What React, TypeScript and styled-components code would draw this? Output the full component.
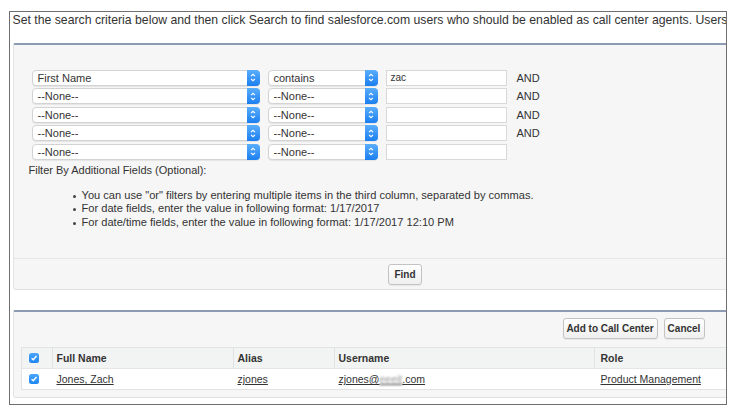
import React from "react";
import styled, { createGlobalStyle } from "styled-components";

const Global = createGlobalStyle`
  html, body { margin: 0; padding: 0; background: #ffffff; }
  body { font-family: "Liberation Sans", Arial, sans-serif; color: #2b2b2b; }
  * { box-sizing: border-box; }
`;

const Frame = styled.div`
  margin: 11px 0 0 9px;
  width: 718px;
  height: 394px;
  border: 1.5px solid #6f6f6f;
  overflow: hidden;
  background: #fff;
`;

const Intro = styled.div`
  padding: 1px 0 0 2.5px;
  font-size: 12.25px;
  line-height: 14px;
  white-space: nowrap;
  overflow: hidden;
  color: #333;
`;

const Panel = styled.div<{ $top: number }>`
  margin: ${(p) => p.$top}px 0 0 2.5px;
  width: 784px;
  background: #f6f6f6;
  border-top: 2px solid #8c9ab2;
  border-left: 1px solid #e4e4e4;
  border-bottom: 1px solid #e0e0e0;
  border-radius: 2px 0 0 3px;
`;

const SearchBody = styled.div`
  height: 213px;
  padding: 24.5px 0 0 15px;
`;

const Criteria = styled.div`
  margin-left: 3px;
  display: flex;
  flex-direction: column;
  gap: 2.5px;
`;

const Row = styled.div`
  display: flex;
  align-items: center;
  gap: 8px;
  height: 16px;
`;

const SelectBox = styled.div<{ $w: number }>`
  width: ${(p) => p.$w}px;
  height: 16px;
  display: flex;
  align-items: stretch;
  background: #fff;
  border: 1px solid #d3d3d3;
  border-radius: 4px;
  box-shadow: 0 1px 1px rgba(0, 0, 0, 0.07);
  font-size: 11px;
  color: #333;
`;

const SelectText = styled.span`
  flex: 1;
  padding-left: 5px;
  line-height: 14px;
  white-space: nowrap;
  overflow: hidden;
`;

const SelectArrow = styled.span`
  width: 13px;
  margin: -1px -1px -1px 0;
  border-radius: 0 4px 4px 0;
  background: linear-gradient(#5aaefc, #1b7ff0);
  display: flex;
  align-items: center;
  justify-content: center;
`;

const TextInput = styled.div`
  width: 121px;
  height: 16px;
  background: #fff;
  border: 1px solid #d8d8d8;
  font-size: 10px;
  line-height: 14px;
  padding-left: 4px;
  color: #333;
`;

const AndLabel = styled.span`
  margin-left: 2px;
  font-size: 11px;
  color: #333;
`;

const FilterTitle = styled.div`
  margin-top: 4px;
  font-size: 11px;
  line-height: 13px;
  color: #333;
`;

const Notes = styled.ul`
  margin: 12px 0 0 53px;
  padding: 0;
  list-style: none;
  font-size: 11.1px;
  line-height: 13.5px;
  color: #333;
`;

const Note = styled.li`
  position: relative;
  &::before {
    content: "";
    position: absolute;
    left: -9px;
    top: 6px;
    width: 3px;
    height: 3px;
    border-radius: 50%;
    background: #444;
  }
`;

const FindBar = styled.div`
  border-top: 1px solid #e6e6e6;
  height: 31px;
  display: flex;
  align-items: center;
  justify-content: center;
`;

const Button = styled.button<{ $w: number }>`
  width: ${(p) => p.$w}px;
  height: 21px;
  padding: 0;
  border: 1px solid #c3c3c3;
  border-radius: 3px;
  background: linear-gradient(#ffffff, #efefef);
  box-shadow: 0 1px 1px rgba(0, 0, 0, 0.06);
  font-family: "Liberation Sans", Arial, sans-serif;
  font-weight: bold;
  font-size: 10px;
  color: #333;
`;

const ButtonBar = styled.div`
  display: flex;
  justify-content: flex-end;
  gap: 6px;
  padding: 6px 92px 0 0;
`;

const Table = styled.div`
  margin: 8px 0 7px 7px;
  border: 1px solid #e3e3e3;
  background: #fff;
`;

const TRow = styled.div<{ $head?: boolean }>`
  display: grid;
  grid-template-columns: 30px 181px 101px 260px 1fr;
  height: ${(p) => (p.$head ? 21 : 20)}px;
  background: ${(p) => (p.$head ? "#f2f3f3" : "#fff")};
  border-bottom: ${(p) => (p.$head ? "1px solid #e6e6e6" : "none")};
  font-size: 10.5px;
  color: #333;
  font-weight: ${(p) => (p.$head ? "bold" : "normal")};
`;

const Cell = styled.div<{ $head?: boolean; $pad?: number }>`
  display: flex;
  align-items: center;
  padding-left: ${(p) => p.$pad ?? 4}px;
  border-left: ${(p) => (p.$head ? "1px solid #e2e2e2" : "none")};
  white-space: nowrap;
  &:first-child { border-left: none; }
`;

const Link = styled.span`
  text-decoration: underline;
  color: #333;
`;

const Blurred = styled.span`
  color: #999;
  filter: blur(1.2px);
`;

const Check = styled.span`
  width: 10px;
  height: 10px;
  border-radius: 2.5px;
  background: linear-gradient(#4aa6fb, #1e86f3);
  display: flex;
  align-items: center;
  justify-content: center;
`;

const Chevrons = () => (
  <svg width="6" height="9" viewBox="0 0 6 9">
    <path d="M1 3.2 L3 1.3 L5 3.2 M1 5.8 L3 7.7 L5 5.8" fill="none" stroke="#fff" strokeWidth="1.1" />
  </svg>
);

const CheckBox = () => (
  <Check>
    <svg width="8" height="8" viewBox="0 0 8 8">
      <path d="M1.6 4.2 L3.3 5.8 L6.5 2" fill="none" stroke="#fff" strokeWidth="1.4" />
    </svg>
  </Check>
);

const Select = ({ w, text }: { w: number; text: string }) => (
  <SelectBox $w={w}>
    <SelectText>{text}</SelectText>
    <SelectArrow>
      <Chevrons />
    </SelectArrow>
  </SelectBox>
);

const rows = [
  { field: "First Name", op: "contains", value: "zac", and: true },
  { field: "--None--", op: "--None--", value: "", and: true },
  { field: "--None--", op: "--None--", value: "", and: true },
  { field: "--None--", op: "--None--", value: "", and: true },
  { field: "--None--", op: "--None--", value: "", and: false },
];

export default function App() {
  return (
    <>
      <Global />
      <Frame>
        <Intro>
          Set the search criteria below and then click Search to find salesforce.com users who should be enabled as call center agents. Users a
        </Intro>
        <Panel $top={16}>
          <SearchBody>
            <Criteria>
              {rows.map((r, i) => (
                <Row key={i}>
                  <Select w={228} text={r.field} />
                  <Select w={110} text={r.op} />
                  <TextInput>{r.value}</TextInput>
                  {r.and && <AndLabel>AND</AndLabel>}
                </Row>
              ))}
            </Criteria>
            <FilterTitle>Filter By Additional Fields (Optional):</FilterTitle>
            <Notes>
              <Note>You can use "or" filters by entering multiple items in the third column, separated by commas.</Note>
              <Note>For date fields, enter the value in following format: 1/17/2017</Note>
              <Note>For date/time fields, enter the value in following format: 1/17/2017 12:10 PM</Note>
            </Notes>
          </SearchBody>
          <FindBar>
            <Button $w={34}>Find</Button>
          </FindBar>
        </Panel>
        <Panel $top={20}>
          <ButtonBar>
            <Button $w={95}>Add to Call Center</Button>
            <Button $w={41}>Cancel</Button>
          </ButtonBar>
          <Table>
            <TRow $head>
              <Cell $head $pad={7}>
                <CheckBox />
              </Cell>
              <Cell $head>Full Name</Cell>
              <Cell $head>Alias</Cell>
              <Cell $head>Username</Cell>
              <Cell $head $pad={6}>Role</Cell>
            </TRow>
            <TRow>
              <Cell $pad={7}>
                <CheckBox />
              </Cell>
              <Cell $pad={5}>
                <Link>Jones, Zach</Link>
              </Cell>
              <Cell $pad={5}>
                <Link>zjones</Link>
              </Cell>
              <Cell $pad={5}>
                <Link>
                  zjones@<Blurred>eeeit</Blurred>.com
                </Link>
              </Cell>
              <Cell $pad={7}>
                <Link>Product Management</Link>
              </Cell>
            </TRow>
          </Table>
        </Panel>
      </Frame>
    </>
  );
}
